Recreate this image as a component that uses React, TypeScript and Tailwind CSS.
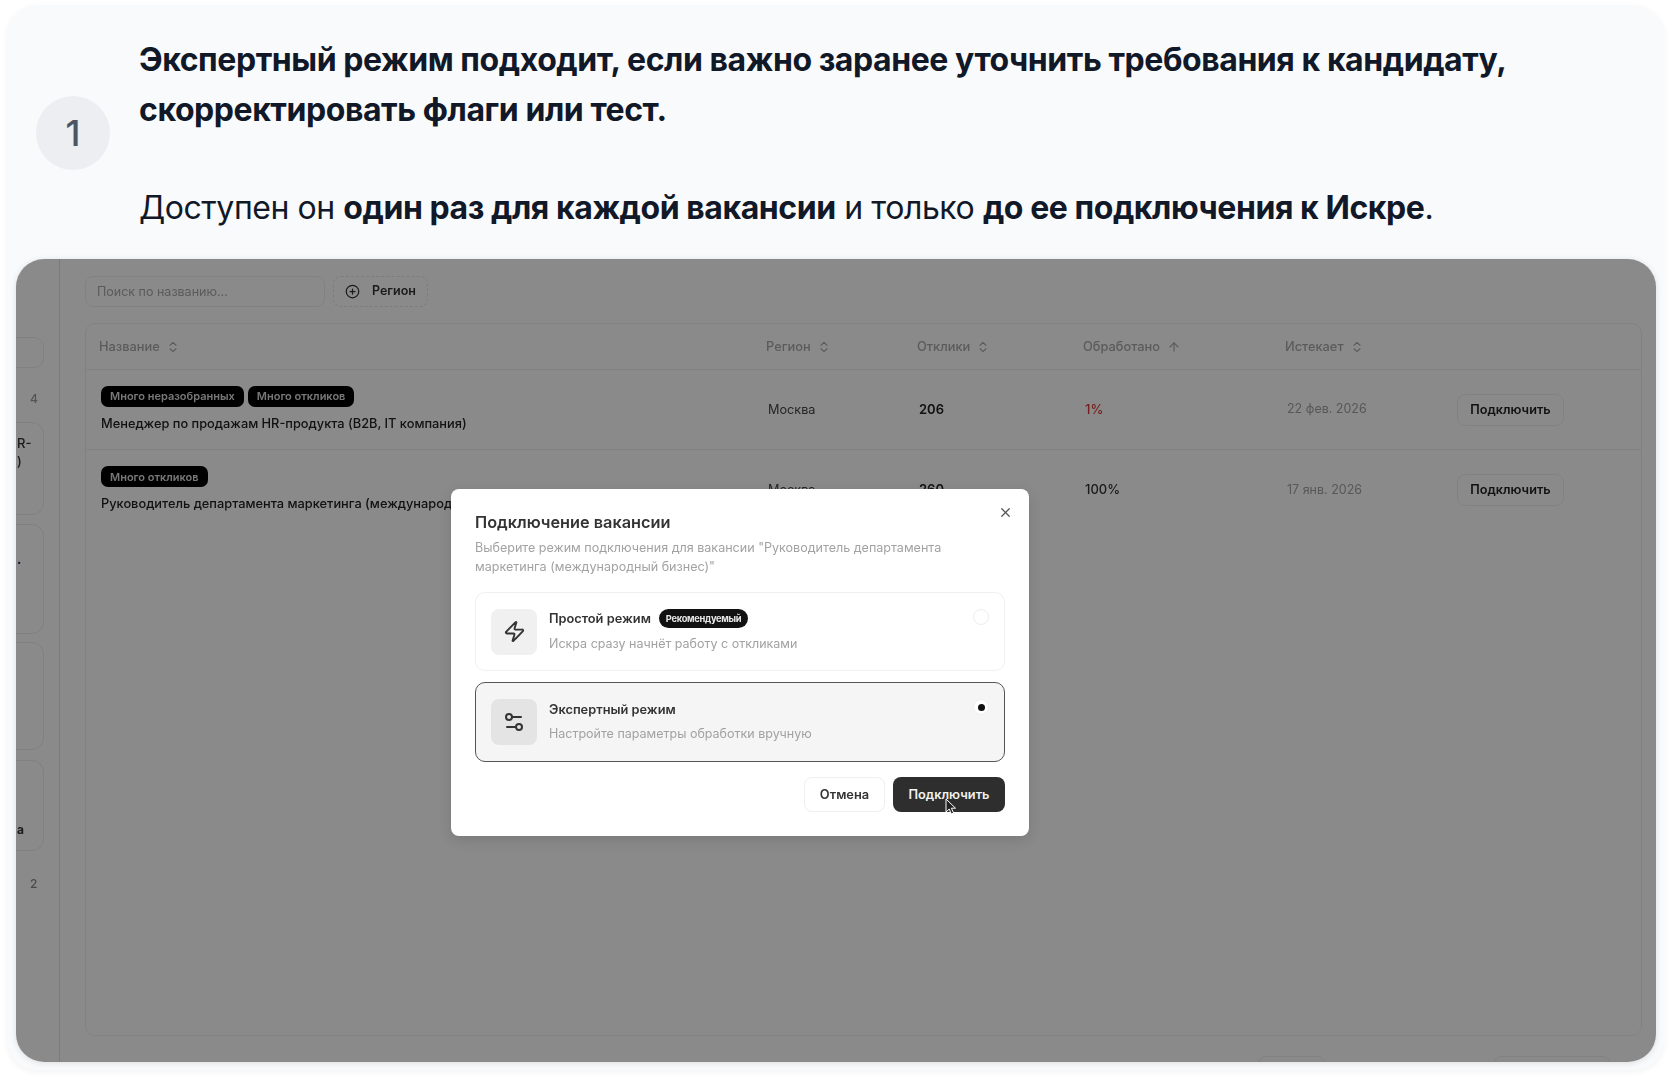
import { ArrowUp, ChevronsUpDown, CirclePlus, Settings2, X, Zap } from "lucide-react";

const columns = "grid grid-cols-[667px_151px_166px_202px_172px_1fr] items-center";

function SortHead({ label, up }: { label: string; up?: boolean }) {
  return (
    <div className={`flex items-center pl-[13px] text-[12.8px] font-medium text-[#a9a9a9] ${up ? "gap-[7px]" : "gap-[6px]"}`}>
      {label}
      {up ? <ArrowUp size={14} /> : <ChevronsUpDown size={14} />}
    </div>
  );
}

function Badge({ children }: { children: string }) {
  return (
    <span className="flex h-[21px] items-center rounded-[7px] bg-black px-[9px] text-[11px] font-semibold text-[#dcdcdc]">
      {children}
    </span>
  );
}

function Row({
  tags,
  name,
  responses,
  done,
  hot,
  expires,
  last,
}: {
  tags: string[];
  name: string;
  responses: string;
  done: string;
  hot?: boolean;
  expires: string;
  last?: boolean;
}) {
  return (
    <div className={`${columns} h-[80px] text-[13px] ${last ? "" : "border-b border-[#efefef]"}`}>
      <div className="flex flex-col gap-[7px] pl-[15px]">
        <div className="flex gap-[4px]">
          {tags.map((tag) => (
            <Badge key={tag}>{tag}</Badge>
          ))}
        </div>
        <div className="truncate text-[12.8px] font-medium text-[#222]">{name}</div>
      </div>
      <div className="pl-[15px] text-[12.7px] text-[#444]">Москва</div>
      <div className="pl-[15px] font-semibold text-[#222]">{responses}</div>
      <div className={`pl-[15px] font-medium ${hot ? "text-[#dc3a3a]" : "text-[#333]"}`}>{done}</div>
      <div className="pl-[15px] text-[12.5px] text-[#a3a3a3]">{expires}</div>
      <div className="pl-[13px]">
        <button className="h-[32px] w-[107px] rounded-[8px] border border-[#efefef] text-[12.7px] font-semibold text-[#222]">
          Подключить
        </button>
      </div>
    </div>
  );
}

function ModeOption({
  icon,
  title,
  hint,
  badge,
  selected,
}: {
  icon: React.ReactNode;
  title: string;
  hint: string;
  badge?: string;
  selected?: boolean;
}) {
  return (
    <div
      className={`flex h-[79px] items-center rounded-[10px] px-[15px] ${
        selected ? "h-[80px] border-[1.5px] border-[#555] bg-[#f5f5f5]" : "border border-[#f0f0f0] bg-white"
      }`}
    >
      <div
        className={`flex h-[46px] w-[46px] shrink-0 items-center justify-center rounded-[8px] text-[#333] ${
          selected ? "bg-[#e4e4e4]" : "bg-[#f0f0f0]"
        }`}
      >
        {icon}
      </div>
      <div className="ml-[12px] flex-1">
        <div className="-mt-[1px] flex h-[20px] items-center gap-[8px] text-[12.8px] font-semibold text-[#333]">
          {title}
          {badge ? (
            <span className="flex h-[19px] items-center rounded-full bg-[#111] px-[7px] text-[9.3px] font-bold tracking-[-0.3px] text-[#e8e8e8]">
              {badge}
            </span>
          ) : null}
        </div>
        <div className="mt-[6px] text-[12.5px] text-[#a2a2a2]">{hint}</div>
      </div>
      <div className="mb-[30px] flex h-[16px] w-[16px] items-center justify-center rounded-full border border-[#eeeeee] bg-white">
        {selected ? <div className="h-[7px] w-[7px] rounded-full bg-[#111]" /> : null}
      </div>
    </div>
  );
}

export default function App() {
  return (
    <div className="h-[1076px] w-[1680px] overflow-hidden bg-white pt-[5px] font-['Inter',sans-serif]">
      <div className="mx-[7px] h-[1065px] w-[1657px] rounded-[30px] bg-[#f9fafc] px-[9px] shadow-[0_2px_6px_rgba(0,0,0,0.05)]">
        {/* Step heading */}
        <div className="flex h-[228px] items-center pl-[20px] pt-[30px]">
          <div className="-mt-[2px] flex h-[74px] w-[74px] shrink-0 items-center justify-center rounded-full bg-[#eceef1] text-[36px] font-[550] text-[#4b5563]">
            1
          </div>
          <div className="ml-[29px] text-[32px] leading-[49.33px] tracking-[-0.44px] text-[#111827]">
            <p className="font-bold">
              Экспертный режим подходит, если важно заранее уточнить требования к кандидату,
              <br />
              скорректировать флаги или тест.
            </p>
            <p className="mt-[49.33px]">
              Доступен он <b>один раз для каждой вакансии</b> и только <b>до ее подключения к Искре</b>.
            </p>
          </div>
        </div>

        {/* Screenshot panel */}
        <div className="relative mt-[26px] flex h-[803px] w-[1640px] overflow-hidden rounded-[28px] bg-white shadow-[0_1px_6px_rgba(0,0,0,0.12)] blur-[0.5px]">
          <aside className="w-[44px] shrink-0 overflow-hidden border-r border-[#e6e6e6] pt-[78px] text-[13px] text-[#333]">
            <div className="-ml-[32px] h-[31px] w-[60px] rounded-[10px] border border-[#ececec]" />
            <div className="mt-[22px] h-[18px] pl-[14px] text-[12px] font-medium leading-[18px] text-[#9a9a9a]">4</div>
            <div className="-ml-[32px] mt-[14px] h-[93px] w-[60px] rounded-[12px] border border-[#ececec] pl-[32px] pt-[11px] font-medium leading-[18px]">
              R-
              <br />)
            </div>
            <div className="-ml-[32px] mt-[9px] h-[110px] w-[60px] rounded-[12px] border border-[#ececec] pl-[32px] pt-[28px] font-bold text-[#1e2a5a]">
              ·
            </div>
            <div className="-ml-[32px] mt-[8px] h-[108px] w-[60px] rounded-[12px] border border-[#ececec]" />
            <div className="-ml-[32px] mt-[10px] h-[91px] w-[60px] rounded-[12px] border border-[#ececec] pl-[32px] pt-[60px] text-[12px] font-bold">
              а
            </div>
            <div className="mt-[24px] pl-[14px] text-[12px] font-medium text-[#8a8a8a]">2</div>
          </aside>

          <main className="min-w-0 flex-1 pl-[25px] pr-[14px] pt-[17px]">
            <div className="flex gap-[8px]">
              <div className="flex h-[31px] w-[240px] items-center rounded-[8px] border border-[#efefef] px-[11px] pt-[1px] text-[12.5px] text-[#a8a8a8]">
                Поиск по названию...
              </div>
              <div className="flex h-[31px] w-[95px] items-center gap-[10px] rounded-[8px] border border-dashed border-[#e6e6e6] pl-[11px] text-[12.5px] font-semibold text-[#333]">
                <CirclePlus size={15} className="mr-[2px]" />
                Регион
              </div>
            </div>

            <div className="mt-[16px] h-[713px] rounded-[10px] border border-[#efefef]">
              <div className={`${columns} h-[46px] border-b border-[#efefef]`}>
                <SortHead label="Название" />
                <SortHead label="Регион" />
                <SortHead label="Отклики" />
                <SortHead label="Обработано" up />
                <SortHead label="Истекает" />
              </div>
              <Row
                tags={["Много неразобранных", "Много откликов"]}
                name="Менеджер по продажам HR-продукта (B2B, IT компания)"
                responses="206"
                done="1%"
                hot
                expires="22 фев. 2026"
              />
              <Row
                tags={["Много откликов"]}
                name="Руководитель департамента маркетинга (международный бизнес)"
                responses="260"
                done="100%"
                expires="17 янв. 2026"
                last
              />
            </div>

            {/* Pagination peeking at the bottom edge */}
            <div className="mt-[20px] flex justify-end gap-[6px] pr-[32px]">
              <div className="mr-[163px] h-[32px] w-[67px] rounded-[8px] border border-[#efefef]" />
              <div className="h-[32px] w-[116px] rounded-[8px] border border-[#efefef]" />
            </div>
          </main>

          {/* Dim layer */}
          <div className="absolute inset-0 bg-black/[0.46]" />

          {/* Dialog */}
          <div className="absolute left-[435px] top-[230px] h-[347px] w-[578px] rounded-[8px] bg-white px-[24px] pt-[21px] shadow-[0_4px_14px_rgba(0,0,0,0.12)]">
            <X size={15} className="absolute right-[16px] top-[16px] text-[#555]" />
            <h2 className="text-[16.3px] font-semibold leading-[24px] text-[#333]">Подключение вакансии</h2>
            <p className="mt-[4px] w-[500px] text-[12.55px] leading-[19px] text-[#a2a2a2]">
              Выберите режим подключения для вакансии "Руководитель департамента маркетинга (международный бизнес)"
            </p>
            <div className="mt-[16px] flex flex-col gap-[11px]">
              <ModeOption
                icon={<Zap size={23} />}
                title="Простой режим"
                badge="Рекомендуемый"
                hint="Искра сразу начнёт работу с откликами"
              />
              <ModeOption
                icon={<Settings2 size={24} />}
                title="Экспертный режим"
                hint="Настройте параметры обработки вручную"
                selected
              />
            </div>
            <div className="mt-[15px] flex justify-end gap-[8px]">
              <button className="h-[35px] w-[81px] rounded-[8px] border border-[#efefef] text-[12.8px] font-semibold text-[#333]">
                Отмена
              </button>
              <button className="relative h-[35px] w-[112px] rounded-[8px] bg-[#2e2e2e] text-[12.8px] font-semibold text-[#f2f2f2]">
                Подключить
                <svg viewBox="0 0 12 18" className="absolute left-[52px] top-[21px] h-[18px] w-[12px]">
                  <path d="M1 1v13l3.2-3 2.2 5 2.2-1-2.2-4.8H10.5z" fill="#222" stroke="#fff" strokeWidth="1" />
                </svg>
              </button>
            </div>
          </div>
        </div>
      </div>
    </div>
  );
}
